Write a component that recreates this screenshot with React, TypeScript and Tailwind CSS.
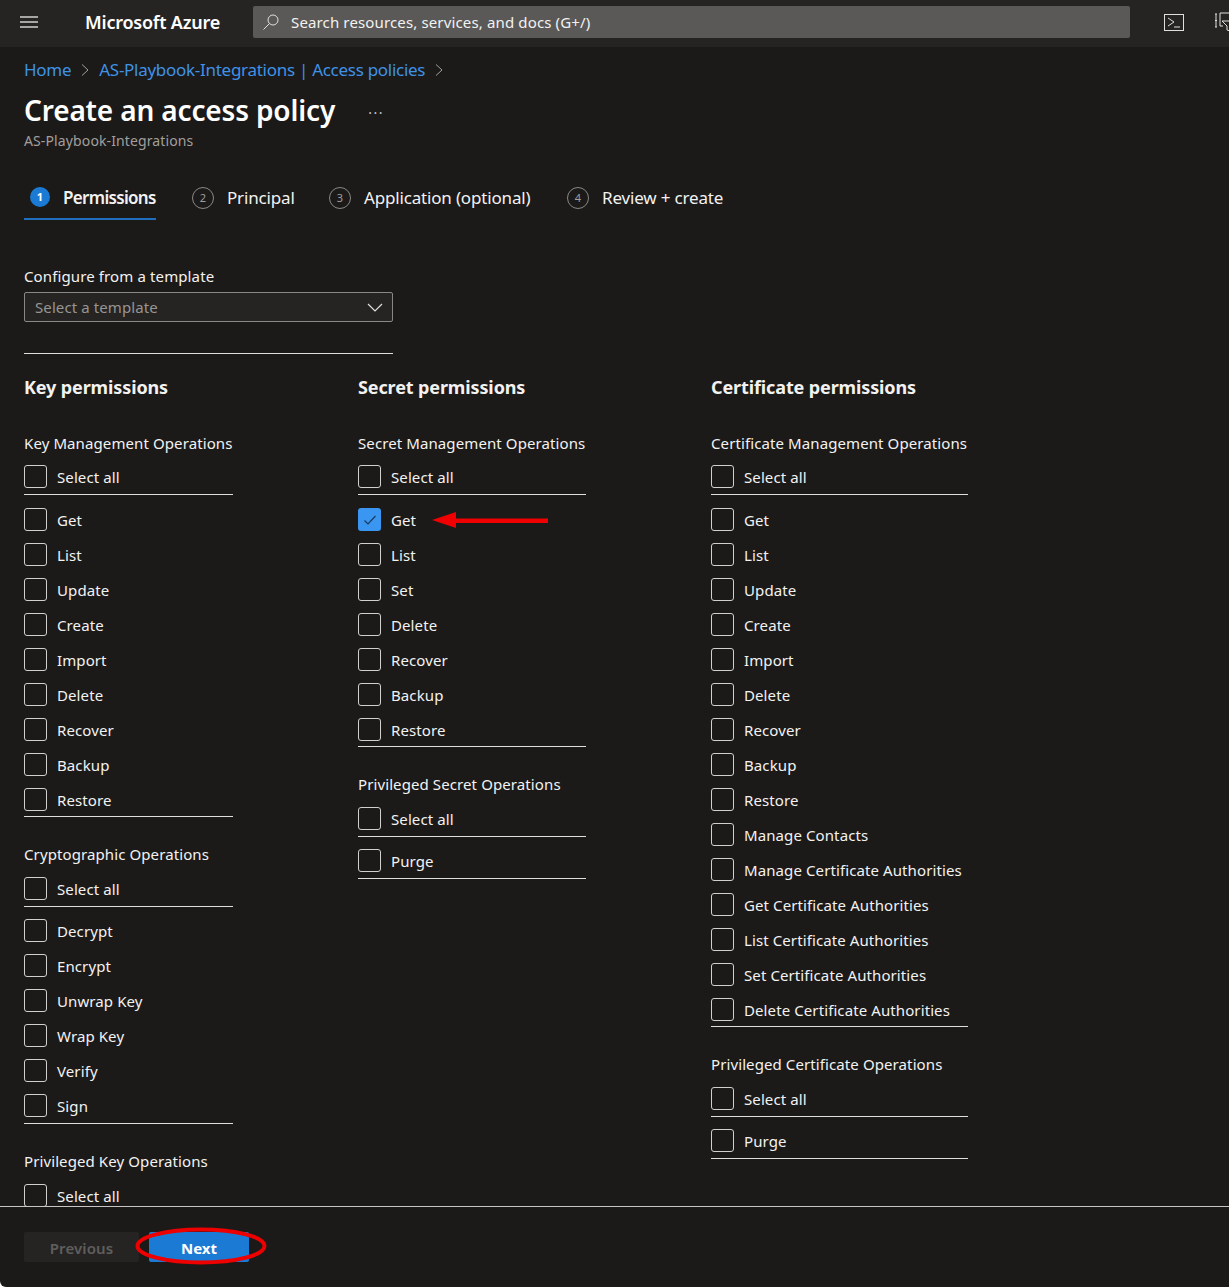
import React from "react";

const font = { fontFamily: '"Noto Sans", "Open Sans", sans-serif' };

function Box({ checked = false }: { checked?: boolean }) {
  return checked ? (
    <span className="-mt-px flex h-[23px] w-[23px] shrink-0 items-center justify-center rounded-[3px] bg-[#3a96f0]">
      <svg width="16" height="16" viewBox="0 0 16 16" fill="none" stroke="#1b3a5c" strokeWidth="1.2">
        <path d="M2.5 8.5 L6 12 L13.5 4" />
      </svg>
    </span>
  ) : (
    <span className="-mt-px h-[23px] w-[23px] shrink-0 rounded-[3px] border border-[#d2d0ce]" />
  );
}

function Row({ label, checked, cls }: { label: string; checked?: boolean; cls: string }) {
  return (
    <div className={`flex items-center ${cls}`}>
      <Box checked={checked} />
      <span className="ml-[10px] whitespace-nowrap text-[15px] leading-5 tracking-[0.1px] text-[#f3f2f1]">{label}</span>
    </div>
  );
}

function Group({ title, items, checked, first }: { title: string; items: string[]; checked?: string; first?: boolean }) {
  return (
    <div className={first ? "" : "mt-[27px]"}>
      <div className="h-[20px] whitespace-nowrap text-[15px] leading-5 tracking-[0.1px] text-[#f3f2f1]">{title}</div>
      <Row label="Select all" cls={`h-[35px] border-b border-[#e1dfdd] ${first ? "mt-[7px]" : "mt-[8px]"}`} />
      {items.length > 0 && (
        <div className={`flex flex-col gap-[3px] border-b border-[#e1dfdd] ${first ? "mt-[9px]" : "mt-[8px] pb-px"}`}>
          {items.map((i) => (
            <Row key={i} label={i} checked={i === checked} cls="h-[32px]" />
          ))}
        </div>
      )}
    </div>
  );
}

function Column({ title, width, children }: { title: string; width: string; children: React.ReactNode }) {
  return (
    <div className={`shrink-0 ${width}`}>
      <h2 className="mb-[33px] h-[26px] whitespace-nowrap text-[18px] font-bold leading-[26px] tracking-[-0.12px] text-[#f3f2f1]">{title}</h2>
      {children}
    </div>
  );
}

function Step({ n, label, active, cls }: { n: string; label: string; active?: boolean; cls: string }) {
  return (
    <div className={`flex h-[40px] items-start pt-[6px] ${cls} ${active ? "border-b-2 border-[#1f6fbd]" : ""}`}>
      {active ? (
        <span className="ml-[6px] mt-[1px] flex h-[20px] w-[20px] shrink-0 items-center justify-center rounded-full bg-[#1b7ad3] text-[11px] font-bold text-white">{n}</span>
      ) : (
        <span className="mt-[1px] flex h-[22px] w-[22px] shrink-0 items-center justify-center rounded-full border border-[#8a8886] text-[11px] text-[#a19f9d]">{n}</span>
      )}
      <span className={`ml-[13px] whitespace-nowrap text-[17px] leading-6 text-[#f3f2f1] ${active ? "font-semibold tracking-[-0.68px]" : "tracking-[-0.17px]"}`}>{label}</span>
    </div>
  );
}

const Chevron = () => (
  <svg width="10" height="14" viewBox="0 0 10 14" fill="none" stroke="#a19f9d" strokeWidth="1" className="mx-[9px] shrink-0">
    <path d="M2 1.5 L8 7 L2 12.5" />
  </svg>
);

export default function App() {
  return (
    <div className="relative flex h-[1287px] w-full flex-col overflow-hidden rounded-bl-[6px] bg-[#1b1a19]" style={font}>
      <header className="flex h-[47px] shrink-0 items-center bg-[#252423] pb-[3px]">
        <svg width="18" height="12" viewBox="0 0 18 12" stroke="#d2d0ce" strokeWidth="1.3" className="ml-[20px] shrink-0">
          <path d="M0 1 H18 M0 6 H18 M0 11 H18" />
        </svg>
        <span className="ml-[47px] w-[168px] shrink-0 whitespace-nowrap text-[18px] font-semibold tracking-[-0.22px] text-white">Microsoft Azure</span>
        <div className="flex h-[32px] w-[877px] shrink-0 items-center rounded-[2px] bg-[#5a5957] pl-[9px]">
          <svg width="18" height="18" viewBox="0 0 18 18" fill="none" stroke="#e1dfdd" strokeWidth="1">
            <circle cx="11" cy="7" r="5" />
            <path d="M7.5 10.5 L1.5 16.5" />
          </svg>
          <span className="ml-[11px] whitespace-nowrap text-[15px] tracking-[0.14px] text-[#f3f2f1]">Search resources, services, and docs (G+/)</span>
        </div>
        <svg width="20" height="17" viewBox="0 0 20 17" fill="none" stroke="#e1dfdd" strokeWidth="1" className="ml-[34px] shrink-0">
          <rect x="0.5" y="0.5" width="19" height="16" />
          <path d="M4 4 L10 8 L4 12 M10 13 H16" />
        </svg>
        <svg width="24" height="20" viewBox="0 0 24 20" fill="none" stroke="#e1dfdd" strokeWidth="1" className="ml-[29px] shrink-0">
          <path d="M2 2 H4 M3 2 V15 M2 15 H4 M2 8.5 H4" />
          <path d="M7 1 H22 V8 M7 1 V14 H10" />
          <path d="M9 9 H22 L17 14 V19 L14 18 V14 Z" />
        </svg>
      </header>

      <main className="min-h-0 flex-1 overflow-hidden pl-[24px]">
        <nav className="mt-[11px] flex h-[24px] items-center whitespace-nowrap text-[17px] tracking-[-0.28px] text-[#3f92e6]">
          <span>Home</span>
          <Chevron />
          <span>AS-Playbook-Integrations | Access policies</span>
          <Chevron />
        </nav>
        <div className="mt-[10px] flex h-[36px] items-center">
          <h1 className="whitespace-nowrap text-[28px] font-semibold leading-9 tracking-[-0.15px] text-white">Create an access policy</h1>
          <span className="ml-[33px] mt-[-4px] text-[14px] tracking-[1.5px] text-[#c8c6c4]">...</span>
        </div>
        <div className="mt-[3px] h-[20px] whitespace-nowrap text-[14px] leading-5 tracking-[0.12px] text-[#a19f9d]">AS-Playbook-Integrations</div>

        <div className="mt-[29px] flex h-[40px]">
          <Step n="1" label="Permissions" active cls="w-[132px]" />
          <Step n="2" label="Principal" cls="ml-[36px] w-[101px]" />
          <Step n="3" label="Application (optional)" cls="ml-[36px] w-[202px]" />
          <Step n="4" label="Review + create" cls="ml-[36px]" />
        </div>

        <div className="mt-[46px] h-[20px] whitespace-nowrap text-[15px] leading-5 tracking-[0.12px] text-[#f3f2f1]">Configure from a template</div>
        <div className="mt-[6px] flex h-[30px] w-[369px] items-center justify-between rounded-[2px] border border-[#8a8886] bg-[#252423] pl-[10px] pr-[9px]">
          <span className="text-[15px] tracking-[0.1px] text-[#979593]">Select a template</span>
          <svg width="16" height="9" viewBox="0 0 16 9" fill="none" stroke="#e1dfdd" strokeWidth="1.2">
            <path d="M1 1 L8 8 L15 1" />
          </svg>
        </div>
        <div className="mt-[31px] h-px w-[369px] bg-[#e1dfdd]" />

        <div className="mt-[20px] flex gap-[125px]">
          <Column title="Key permissions" width="w-[209px]">
            <Group first title="Key Management Operations" items={["Get", "List", "Update", "Create", "Import", "Delete", "Recover", "Backup", "Restore"]} />
            <Group title="Cryptographic Operations" items={["Decrypt", "Encrypt", "Unwrap Key", "Wrap Key", "Verify", "Sign"]} />
            <Group title="Privileged Key Operations" items={[]} />
          </Column>
          <Column title="Secret permissions" width="w-[228px]">
            <Group first title="Secret Management Operations" checked="Get" items={["Get", "List", "Set", "Delete", "Recover", "Backup", "Restore"]} />
            <Group title="Privileged Secret Operations" items={["Purge"]} />
          </Column>
          <Column title="Certificate permissions" width="w-[257px]">
            <Group first title="Certificate Management Operations" items={["Get", "List", "Update", "Create", "Import", "Delete", "Recover", "Backup", "Restore", "Manage Contacts", "Manage Certificate Authorities", "Get Certificate Authorities", "List Certificate Authorities", "Set Certificate Authorities", "Delete Certificate Authorities"]} />
            <Group title="Privileged Certificate Operations" items={["Purge"]} />
          </Column>
        </div>
      </main>

      <footer className="flex h-[81px] shrink-0 items-start border-t border-[#c8c6c4] pl-[24px] pt-[25px]">
        <div className="flex h-[30px] w-[115px] items-center justify-center rounded-[2px] bg-[#252423] pt-[2px] text-[15px] font-semibold tracking-[0.1px] text-[#605e5c]">Previous</div>
        <div className="ml-[10px] flex h-[30px] w-[100px] items-center justify-center rounded-[2px] bg-[#1b7ad3] pt-[2px] text-[15px] font-bold tracking-[0px] text-white">Next</div>
      </footer>

      <svg className="pointer-events-none absolute left-[430px] top-[511px]" width="120" height="18" viewBox="0 0 120 18">
        <path d="M2 9 L26 1 V7.5 H118 V12 H26 V17 Z" fill="#f00000" />
      </svg>
      <svg className="pointer-events-none absolute left-[134px] top-[1226px]" width="134" height="40" viewBox="0 0 134 40" fill="none">
        <ellipse cx="67" cy="20" rx="63.5" ry="16.5" stroke="#ee0000" strokeWidth="4" />
      </svg>
    </div>
  );
}
